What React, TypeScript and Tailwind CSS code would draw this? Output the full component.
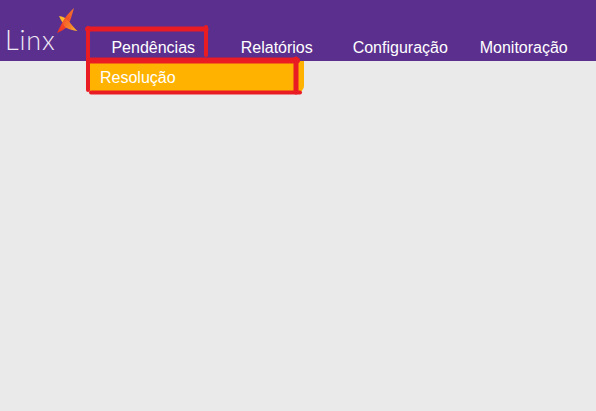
const NAV_ITEMS = ["Pendências", "Relatórios", "Configuração", "Monitoração"];

function LinxLogo() {
  return (
    <div className="relative w-[91.5px] h-[61px] shrink-0">
      <span className="absolute left-[5px] top-[25px] text-[27px] leading-[30px] font-light tracking-[0.8px] text-[#efe9f5] font-['Lato','Open_Sans',sans-serif]">
        Linx
      </span>
      {/* orange star mark */}
      <svg className="absolute left-[54px] top-[6px]" width="26" height="30" viewBox="54 6 26 30">
        <defs>
          <linearGradient id="star" x1="57" y1="33" x2="75" y2="9" gradientUnits="userSpaceOnUse">
            <stop offset="0" stopColor="#ee2f24" />
            <stop offset="0.6" stopColor="#f2522a" />
            <stop offset="1" stopColor="#f47a2c" />
          </linearGradient>
          <linearGradient id="tip" x1="62" y1="21" x2="78" y2="31" gradientUnits="userSpaceOnUse">
            <stop offset="0" stopColor="#f4562a" />
            <stop offset="0.55" stopColor="#f6842a" />
            <stop offset="1" stopColor="#fdc02c" />
          </linearGradient>
        </defs>
        <path d="M59 16 C61 16 63.5 17 66 18.5 L63 23 C61.5 21 60 18.5 59 16 Z" fill="#fbb62c" />
        <path d="M74 8 C71 10.5 67.5 14.5 65 18 L61.5 24 C60 27 58.5 30 57 33 C60.5 31.5 64 29.5 67 27 C70.5 22 72 14.5 74 8 Z" fill="url(#star)" />
        <path d="M65.5 18.5 C69.5 21 73 27 77.5 31 C73 30.5 69 29.5 65.5 27.5 C64 26 63 24 63 22.5 Z" fill="url(#tip)" />
      </svg>
    </div>
  );
}

export default function App() {
  return (
    <div className="relative w-[596px] h-[411px] overflow-hidden bg-[#eaeaea] font-['Liberation_Sans',Arial,sans-serif]">
      {/* Header */}
      <header className="flex h-[61px] bg-[#5b2f8e]">
        <LinxLogo />
        <nav className="grid grid-cols-[repeat(4,123.5px)] pt-[39px]">
          {NAV_ITEMS.map((item) => (
            <a key={item} className="text-center text-base leading-[18px] text-white">
              {item}
            </a>
          ))}
        </nav>
      </header>

      {/* Dropdown */}
      <div className="absolute left-[90px] top-[61px] w-[214px] h-[31px] rounded-br-md bg-[#ffb300] pl-[10px] pt-[8px] text-base leading-[18px] text-white">
        Resolução
      </div>

      {/* Red hand-drawn marks */}
      <svg className="absolute inset-0" width="596" height="411" viewBox="0 0 596 411" fill="none" stroke="#e91c24" strokeLinecap="round">
        <path d="M87.5 29 H206" strokeWidth="5" />
        <path d="M88 28 V90" strokeWidth="4" />
        <path d="M206 27 V55" strokeWidth="4" />
        <path d="M89 60.5 H297" strokeWidth="6" />
        <path d="M296 59 V92" strokeWidth="5" />
        <path d="M91 92.5 H300" strokeWidth="4" />
      </svg>
    </div>
  );
}
